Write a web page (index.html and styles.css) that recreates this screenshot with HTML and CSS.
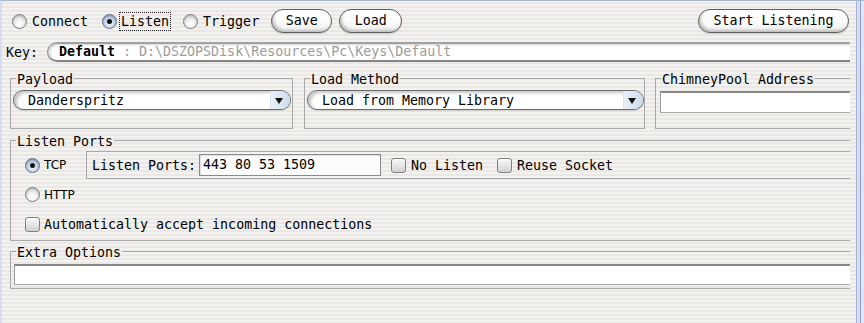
FILE: index.html
```html
<!DOCTYPE html>
<html>
<head>
<meta charset="utf-8">
<title>Listen</title>
<link rel="stylesheet" href="styles.css">
</head>
<body>
<div class="window">
  <div class="content">
    <div class="toolbar">
      <label class="opt opt-connect"><span class="radio"></span><span class="lbl">Connect</span></label>
      <label class="opt opt-listen"><span class="radio on"></span><span class="lbl focus">Listen</span></label>
      <label class="opt opt-trigger"><span class="radio"></span><span class="lbl">Trigger</span></label>
      <button class="btn btn-save">Save</button>
      <button class="btn btn-load">Load</button>
      <button class="btn btn-start">Start Listening</button>
    </div>

    <div class="keyrow">
      <span class="keylbl">Key:</span>
      <div class="keyfield"><b>Default</b><span class="path"> : D:\DSZOPSDisk\Resources\Pc\Keys\Default</span></div>
    </div>

    <div class="groups">
      <fieldset class="grp grp-payload">
        <legend>Payload</legend>
        <div class="combo combo-payload"><span class="combo-text">Danderspritz</span><span class="arrow"><span class="tri"></span></span></div>
      </fieldset>
      <fieldset class="grp grp-method">
        <legend>Load Method</legend>
        <div class="combo combo-method"><span class="combo-text">Load from Memory Library</span><span class="arrow"><span class="tri"></span></span></div>
      </fieldset>
      <fieldset class="grp grp-chimney">
        <legend>ChimneyPool Address</legend>
        <div class="tfield tf-chimney"></div>
      </fieldset>
    </div>

    <fieldset class="grp grp-ports">
      <legend>Listen Ports</legend>
      <div class="row-tcp">
        <label class="opt opt-tcp"><span class="radio on"></span><span class="sans">TCP</span></label>
        <div class="portpanel">
          <span class="plbl">Listen Ports:</span>
          <div class="portfield">443 80 53 1509</div>
          <label class="opt opt-nolisten"><span class="check"></span><span class="lbl">No Listen</span></label>
          <label class="opt opt-reuse"><span class="check"></span><span class="lbl">Reuse Socket</span></label>
        </div>
      </div>
      <label class="opt row-http"><span class="radio"></span><span class="sans">HTTP</span></label>
      <label class="opt row-auto"><span class="check"></span><span class="lbl">Automatically accept incoming connections</span></label>
    </fieldset>

    <fieldset class="grp grp-extra">
      <legend>Extra Options</legend>
      <div class="tfield tf-extra"></div>
    </fieldset>
  </div>
  <div class="gutter"></div>
  <div class="edge"></div>
</div>
</body>
</html>
```

FILE: styles.css
```css
* { box-sizing: border-box; }
html, body { margin: 0; padding: 0; }
body {
  width: 864px;
  height: 323px;
  overflow: hidden;
  font-family: "DejaVu Sans Mono", "Liberation Mono", monospace;
  font-size: 13.3px;
  color: #000;
  background: repeating-linear-gradient(to bottom, #f3f2f0 0 2px, #e9e8e4 2px 4px);
}
.window {
  display: flex;
  height: 323px;
  border-top: 1px solid #a9b6cf;
  border-left: 2px solid #d3ddf3;
}
.content { width: 848px; flex: none; overflow: hidden; }
.gutter { width: 6px; flex: none; }
.edge {
  width: 8px;
  flex: none;
  background: linear-gradient(to right, #a3b3d2 0 1px, #d3def5 1px 4px, #8d9fc6 4px 5px, #dfe7f8 5px);
}

/* generic option (radio / checkbox + label) */
.opt { display: flex; align-items: center; flex: none; white-space: pre; }
.radio {
  position: relative;
  width: 15px; height: 15px; flex: none;
  border-radius: 50%;
  border: 1px solid #7b7b7b;
  background: radial-gradient(circle at 50% 70%, #ffffff 0, #f3f3f3 35%, #c9c9c9 100%);
  box-shadow: inset 0 1px 2px rgba(0,0,0,.18);
}
.radio.on {
  background: radial-gradient(circle at 50% 65%, #f2f6fc 0, #bccbe0 55%, #7d93b7 100%);
  border-color: #5f6f8a;
}
.radio.on::after {
  content: "";
  position: absolute;
  left: 4px; top: 4px;
  width: 5px; height: 5px;
  border-radius: 50%;
  background: #111;
}
.check {
  width: 15px; height: 15px; flex: none;
  border-radius: 3px;
  border: 1px solid #808080;
  background: linear-gradient(#f9f9f9, #e2e2e2 60%, #d0d0d0);
  box-shadow: inset 0 1px 1px rgba(255,255,255,.8);
}
.sans { font-family: "DejaVu Sans", sans-serif; font-size: 12px; }

/* toolbar */
.toolbar {
  display: flex;
  align-items: center;
  height: 24px;
  margin-top: 8px;
  padding-left: 10px;
  padding-right: 1px;
}
.opt-connect { gap: 5px; }
.opt-listen { gap: 2px; margin-left: 14px; }
.opt-trigger { gap: 5px; margin-left: 12px; }
.focus { border: 1px dotted #222; padding: 1px 1px; line-height: 15px; }
.btn {
  font: inherit;
  color: #000;
  height: 24px;
  padding: 0;
  border: 1px solid #5e5e5e;
  border-radius: 12px;
  background: linear-gradient(#ffffff, #fbfbfb 55%, #efefef);
  box-shadow: inset 2px -2px 3px rgba(0,0,0,.22), 0 1px 1px rgba(0,0,0,.15);
  line-height: 20px;
}
.btn-save { width: 61px; margin-left: 12px; }
.btn-load { width: 63px; margin-left: 7px; }
.btn-start { width: 151px; margin-left: auto; }

/* key row */
.keyrow {
  display: flex;
  align-items: center;
  height: 20px;
  margin-top: 9px;
  padding-left: 4px;
}
.keylbl { width: 41px; flex: none; }
.keyfield {
  flex: none;
  width: 820px;
  height: 20px;
  background: #fff;
  border-top: 2px solid #a2a2a2;
  border-bottom: 2px solid #858585;
  border-left: 1px solid #8a8a8a;
  border-radius: 10px 0 0 10px;
  box-shadow: inset 2px 1px 2px rgba(0,0,0,.18);
  padding-left: 11px;
  line-height: 16px;
  white-space: pre;
}
.keyfield b { font-weight: bold; }
.path { color: #9c9c9c; }

/* groups */
.grp {
  margin: 0;
  padding: 0;
  border: 1px solid #a9a9a9;
  min-width: 0;
}
.grp legend {
  margin-left: 5px;
  padding: 3px 1px 0;
  line-height: 14px;
}
.groups {
  display: flex;
  margin-top: 8px;
  padding-left: 8px;
}
.grp-payload { width: 283px; height: 59px; flex: none; }
.grp-method { width: 341px; height: 59px; flex: none; margin-left: 11px; }
.grp-chimney { width: 260px; height: 59px; flex: none; margin-left: 10px; }

.combo {
  display: flex;
  align-items: center;
  height: 20px;
  margin-top: 3px;
  border: 1px solid #6c6c6c;
  border-radius: 10px;
  background: #fff;
  box-shadow: inset 3px 2px 3px rgba(0,0,0,.22), 0 1px 1px rgba(0,0,0,.12);
  overflow: hidden;
}
.combo-payload { margin-left: 2px; margin-right: 1px; }
.combo-method { margin-left: 2px; margin-right: 0; }
.combo-text { flex: 1; padding-left: 14px; white-space: pre; }
.arrow {
  width: 20px;
  height: 100%;
  flex: none;
  display: flex;
  align-items: center;
  justify-content: center;
  padding-right: 3px;
  background: linear-gradient(to right, #e9f0f8, #cddbeb);
  border-left: 1px solid #dbe4ef;
}
.tri {
  width: 0; height: 0;
  border-left: 4px solid transparent;
  border-right: 4px solid transparent;
  border-top: 6px solid #111;
  margin-top: 1px;
}

.tfield {
  background: #fff;
  border-top: 2px solid #888;
  border-left: 1px solid #999;
  border-bottom: 1px solid #aaa;
}
.tf-chimney { height: 22px; margin-top: 4px; margin-left: 4px; }

/* listen ports */
.grp-ports {
  width: 860px;
  height: 109px;
  margin-top: 3px;
  margin-left: 8px;
}
.row-tcp {
  display: flex;
  align-items: center;
  height: 28px;
  margin-top: 2px;
}
.opt-tcp { width: 75px; padding-left: 14px; gap: 4px; }
.portpanel {
  flex: 1;
  display: flex;
  align-items: center;
  height: 28px;
  border-top: 1px solid #a9a9a9;
  border-bottom: 1px solid #a9a9a9;
  border-left: 1px solid #a9a9a9;
  padding-left: 5px;
}
.plbl { width: 107px; flex: none; white-space: pre; }
.portfield {
  width: 182px;
  height: 22px;
  flex: none;
  background: #fcfcfc;
  border: 1px solid #8a8a8a;
  box-shadow: inset 1px 1px 1px rgba(0,0,0,.12);
  padding-left: 3px;
  line-height: 20px;
}
.opt-nolisten { margin-left: 10px; gap: 5px; }
.opt-reuse { margin-left: 14px; gap: 5px; }
.row-http { height: 15px; margin-top: 8px; padding-left: 14px; gap: 4px; }
.row-auto { height: 15px; margin-top: 15px; padding-left: 14px; gap: 4px; }

/* extra options */
.grp-extra {
  width: 860px;
  height: 46px;
  margin-top: 2px;
  margin-left: 8px;
}
.tf-extra { height: 21px; margin-top: 4px; margin-left: 3px; }
```
